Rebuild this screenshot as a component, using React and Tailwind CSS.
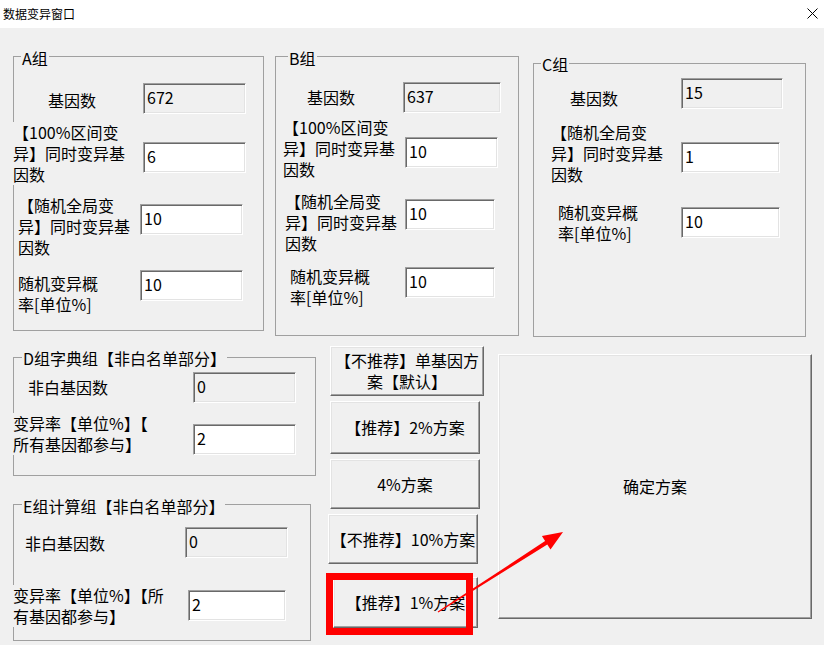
// App.jsx — 数据变异窗口

function Box({ value, readOnly, className = '' }) {
  return (
    <div
      className={`h-[31px] shrink-0 border border-t-[#a0a0a0] border-l-[#a0a0a0] border-r-white border-b-white shadow-[inset_1px_1px_0_#696969,inset_-1px_-1px_0_#e3e3e3] pl-[3px] pt-[3px] text-[16px] leading-[20px] ${readOnly ? 'bg-[#f0f0f0]' : 'bg-white'} ${className}`}
    >
      {value}
    </div>
  );
}

function Row({ h = '', labelCls, label, boxCls, value, readOnly }) {
  return (
    <div className={`flex items-start shrink-0 ${h}`}>
      <div className={`shrink-0 whitespace-nowrap leading-[21px] ${labelCls}`}>{label}</div>
      <Box className={boxCls} value={value} readOnly={readOnly} />
    </div>
  );
}

function Group({ title, titleCls, className, children }) {
  return (
    <div className={`relative shrink-0 flex flex-col border border-[#a0a0a0] ${className}`}>
      <span className={`absolute z-10 px-[1px] bg-[#f0f0f0] leading-[20px] whitespace-nowrap ${titleCls}`}>{title}</span>
      {children}
    </div>
  );
}

function Btn({ className, children }) {
  return (
    <div
      className={`shrink-0 flex items-center justify-center text-center leading-[21px] bg-[#f0f0f0] border border-t-white border-l-white border-r-[#696969] border-b-[#696969] shadow-[inset_-1px_-1px_0_#a0a0a0,inset_1px_1px_0_#e3e3e3] ${className}`}
    >
      {children}
    </div>
  );
}

export default function App() {
  return (
    <div className="relative w-[824px] h-[645px] overflow-hidden bg-[#f0f0f0] text-black text-[16px] font-['Microsoft_YaHei','Noto_Sans_CJK_SC',sans-serif]">
      {/* title bar */}
      <div className="h-[28px] bg-white flex items-center justify-between pl-[3px] pr-[6px]">
        <span className="text-[12px] leading-[16px]">数据变异窗口</span>
        <svg width="11" height="11" viewBox="0 0 11 11" className="mb-[1px]">
          <path d="M0.5 0.5 L10.5 10.5 M10.5 0.5 L0.5 10.5" stroke="#000" strokeWidth="1" fill="none" />
        </svg>
      </div>

      {/* top row: A / B / C */}
      <div className="flex items-start mt-[28px] h-[281px]">
        <Group title="A组" titleCls="left-[7px] -top-[9px]" className="ml-[13px] w-[251px] h-[275px] pt-[26px]">
          <Row h="h-[39px]" labelCls="ml-[34px] w-[95px] mt-[7px]" label="基因数" boxCls="w-[103px]" value="672" readOnly />
          <Row
            h="h-[73px]"
            labelCls="-ml-px w-[130px] bg-[#f0f0f0]"
            label={<>【100%区间变<br />异】同时变异基<br />因数</>}
            boxCls="mt-[20px] w-[103px]"
            value="6"
          />
          <Row
            h="h-[75px]"
            labelCls="ml-[4px] w-[122px]"
            label={<>【随机全局变<br />异】同时变异基<br />因数</>}
            boxCls="mt-[9px] w-[103px]"
            value="10"
          />
          <Row
            labelCls="ml-[4px] w-[122px] mt-[3px]"
            label={<>随机变异概<br />率[单位%]</>}
            boxCls="w-[103px]"
            value="10"
          />
        </Group>

        <Group title="B组" titleCls="left-[12px] -top-[9px]" className="ml-[11px] w-[244px] h-[280px] pt-[25px]">
          <Row h="h-[35px]" labelCls="ml-[31px] w-[96px] mt-[5px]" label="基因数" boxCls="w-[98px]" value="637" readOnly />
          <Row
            h="h-[74px]"
            labelCls="ml-[7px] w-[122px]"
            label={<>【100%区间变<br />异】同时变异基<br />因数</>}
            boxCls="mt-[20px] w-[93px]"
            value="10"
          />
          <Row
            h="h-[75px]"
            labelCls="ml-[9px] w-[120px]"
            label={<>【随机全局变<br />异】同时变异基<br />因数</>}
            boxCls="mt-[8px] w-[90px]"
            value="10"
          />
          <Row
            labelCls="ml-[14px] w-[115px]"
            label={<>随机变异概<br />率[单位%]</>}
            boxCls="mt-[1px] w-[90px]"
            value="10"
          />
        </Group>

        <Group title="C组" titleCls="left-[7px] -top-[10px]" className="ml-[14px] mt-[7px] w-[273px] h-[274px] pt-[14px]">
          <Row h="h-[44px]" labelCls="ml-[36px] w-[111px] mt-[10px]" label="基因数" boxCls="w-[102px]" value="15" readOnly />
          <Row
            h="h-[80px]"
            labelCls="ml-[17px] w-[130px]"
            label={<>【随机全局变<br />异】同时变异基<br />因数</>}
            boxCls="mt-[20px] w-[99px]"
            value="1"
          />
          <Row
            labelCls="ml-[24px] w-[123px]"
            label={<>随机变异概<br />率[单位%]</>}
            boxCls="mt-[5px] w-[99px]"
            value="10"
          />
        </Group>
      </div>

      {/* bottom row */}
      <div className="flex items-start mt-[9px]">
        <div className="flex flex-col ml-[13px] shrink-0">
          <Group title="D组字典组【非白名单部分】" titleCls="left-[8px] -top-[10px]" className="mt-[11px] w-[303px] h-[119px] pt-[14px]">
            <Row h="h-[41px]" labelCls="ml-[14px] w-[165px] mt-[5px]" label="非白基因数" boxCls="w-[103px]" value="0" readOnly />
            <Row
              labelCls="-ml-px w-[180px] bg-[#f0f0f0]"
              label={<>变异率【单位%】【<br />所有基因都参与】</>}
              boxCls="mt-[11px] w-[103px]"
              value="2"
            />
          </Group>
          <Group title="E组计算组【非白名单部分】" titleCls="left-[8px] -top-[9px]" className="mt-[28px] w-[298px] h-[137px] pt-[22px]">
            <Row h="h-[58px]" labelCls="ml-[11px] w-[160px] mt-[6px]" label="非白基因数" boxCls="w-[103px]" value="0" readOnly />
            <Row
              labelCls="-ml-px w-[175px] bg-[#f0f0f0]"
              label={<>变异率【单位%】【所<br />有基因都参与】</>}
              boxCls="mt-[5px] w-[98px]"
              value="2"
            />
          </Group>
        </div>

        <div className="flex flex-col ml-[12px] w-[156px] shrink-0">
          <Btn className="ml-[2px] w-[154px] h-[50px]">【不推荐】单基因方<br />案【默认】</Btn>
          <Btn className="mt-[5px] ml-[2px] w-[150px] h-[53px]">【推荐】2%方案</Btn>
          <Btn className="mt-[5px] ml-[2px] w-[150px] h-[50px]">4%方案</Btn>
          <Btn className="mt-[5px] w-[150px] h-[50px]">【不推荐】10%方案</Btn>
          <Btn className="mt-[13px] ml-[5px] w-[145px] h-[51px]">【推荐】1%方案</Btn>
        </div>

        <Btn className="ml-[14px] mt-[8px] w-[314px] h-[265px]">确定方案</Btn>
      </div>

      {/* annotation: red frame + arrow */}
      <div className="absolute left-[326px] top-[573px] w-[147px] h-[62px] border-[7px] border-[#ff0000] pointer-events-none" />
      <svg className="absolute left-0 top-0 pointer-events-none" width="824" height="645" viewBox="0 0 824 645">
        <polygon
          points="437.7,611.6 545.1,541.1 541.9,536.1 563,532 550.5,549.5 547.3,544.5 438.3,612.4"
          fill="#ff0000"
        />
      </svg>
    </div>
  );
}
